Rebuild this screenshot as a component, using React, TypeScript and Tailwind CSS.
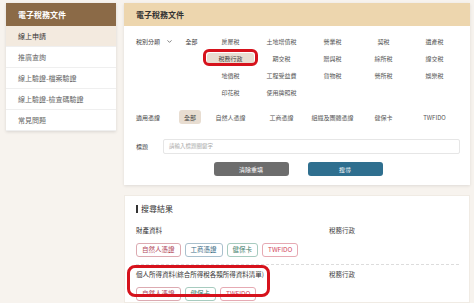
import React from 'react';
import { ChevronDown } from 'lucide-react';

const SIDE_ITEMS = ['線上申請', '推廣查詢', '線上驗證-檔案驗證', '線上驗證-檢查碼驗證', '常見問題'];

const TAX_TYPES = [
  '房屋稅', '土地增值稅', '營業稅', '契稅', '遺產稅',
  '稅務行政', '期交稅', '贈與稅', '綜所稅', '證交稅',
  '地價稅', '工程受益費', '貨物稅', '營所稅', '娛樂稅',
  '印花稅', '使用牌照稅',
];

const CERTS = ['自然人憑證', '工商憑證', '組織及團體憑證', '健保卡', 'TWFIDO'];

const TAG_STYLE: Record<string, string> = {
  '自然人憑證': 'border-[#dcaab1] text-[#b34a5c]',
  '工商憑證': 'border-[#a9c0cd] text-[#3f6f89]',
  '健保卡': 'border-[#a7cbbf] text-[#3d7c69]',
  TWFIDO: 'border-[#e6aab3] text-[#d2485d]',
};

const Tag: React.FC<{ label: string }> = ({ label }) => (
  <span
    className={`h-[14px] px-[5px] flex items-center rounded-[3px] border bg-white text-[6.5px] ${TAG_STYLE[label]}`}
  >
    {label}
  </span>
);

const ResultRow: React.FC<{ title: string; tags: string[] }> = ({ title, tags }) => (
  <div>
    <div className="h-[12px] flex items-center text-[6.5px] text-[#333]">
      <span className="w-[193px]">{title}</span>
      <span className="text-[#444]">稅務行政</span>
    </div>
    <div className="mt-[6px] flex gap-[4px]">
      {tags.map((t) => (
        <Tag key={t} label={t} />
      ))}
    </div>
  </div>
);

export default function App() {
  return (
    <div className="w-[474px] h-[303px] overflow-hidden bg-[#f7f3ee] flex gap-[8px] pl-[6px] pt-[3px] font-['Noto_Sans_CJK_TC','Noto_Sans',sans-serif]">
      {/* Sidebar */}
      <div className="w-[110px] self-start bg-white shadow-[0_1px_3px_rgba(0,0,0,0.12)]">
        <div className="h-[23px] bg-[#8b6a47] text-white text-[8px] font-bold pl-[12px] flex items-center">
          電子稅務文件
        </div>
        {SIDE_ITEMS.map((item, i) => (
          <div
            key={item}
            className={`h-[21px] pl-[12px] flex items-center text-[7px] border-b border-[#efefef] ${
              i === 0 ? 'bg-[#f3eadf] text-[#333]' : 'text-[#666]'
            }`}
          >
            {item}
          </div>
        ))}
      </div>

      {/* Main */}
      <div className="w-[346px] flex flex-col gap-[10px]">
        {/* Filter panel */}
        <div className="bg-white shadow-[0_1px_3px_rgba(0,0,0,0.1)]">
          <div className="h-[23px] bg-[#edd6ae] pl-[12px] flex items-center text-[8px] font-bold text-[#333]">
            電子稅務文件
          </div>
          <div className="pl-[12px] pr-[10px] pt-[7px] pb-[9px]">
            {/* Tax type */}
            <div className="flex">
              <div className="w-[42px] h-[17px] flex items-center gap-[6px] text-[6px] text-[#444]">
                稅別分類
                <ChevronDown size={7} strokeWidth={2.5} className="text-[#555]" />
              </div>
              <div className="w-[27px] h-[17px] flex items-center justify-center text-[6px] text-[#444]">全部</div>
              <div className="grid grid-cols-5 w-[255px]">
                {TAX_TYPES.map((t) => (
                  <div key={t} className="relative h-[17px] flex items-center justify-center text-[6px] text-[#555]">
                    {t === '稅務行政' ? (
                      <>
                        <span className="w-[47px] h-[11px] rounded-[3px] bg-[#e8ddd1] flex items-center justify-center text-[#444]">
                          {t}
                        </span>
                        <span className="absolute left-[-2px] top-[-1px] w-[55px] h-[17px] rounded-[6px] border-[3px] border-[#d6121c]" />
                      </>
                    ) : (
                      t
                    )}
                  </div>
                ))}
              </div>
            </div>

            {/* Certificate */}
            <div className="flex mt-[9px] h-[14px]">
              <div className="w-[42px] flex items-center text-[6px] text-[#444]">適用憑證</div>
              <div className="w-[27px] flex items-center">
                <span className="ml-[1px] w-[22px] h-[14px] rounded-[3px] bg-[#e8ddd1] flex items-center justify-center text-[6px] text-[#444]">
                  全部
                </span>
              </div>
              <div className="grid grid-cols-5 w-[255px]">
                {CERTS.map((c) => (
                  <div key={c} className="flex items-center justify-center text-[6px] text-[#555]">
                    {c}
                  </div>
                ))}
              </div>
            </div>

            {/* Title */}
            <div className="flex items-center mt-[15px]">
              <div className="w-[27px] text-[6px] text-[#444]">標題</div>
              <div className="flex-1 h-[15px] border border-[#e6e6e6] rounded-[2px] flex items-center pl-[5px] text-[5.5px] text-[#aaa]">
                請輸入標題關鍵字
              </div>
            </div>

            {/* Buttons */}
            <div className="flex justify-center gap-[19px] mt-[8px]">
              <button className="w-[75px] h-[14px] rounded-[3px] bg-[#6d6d6d] text-white text-[6px] flex items-center justify-center">
                清除重填
              </button>
              <button className="w-[75px] h-[14px] rounded-[3px] bg-[#2f6f8f] text-white text-[6px] flex items-center justify-center">
                搜尋
              </button>
            </div>
          </div>
        </div>

        {/* Results panel */}
        <div className="relative flex-1 bg-white border border-[#f0ebe4] pl-[11px] pr-[10px] pt-[7px]">
          <div className="h-[12px] flex items-center gap-[3px] text-[8px] text-[#333]">
            <span className="w-[2px] h-[8px] bg-[#333]" />
            搜尋結果
          </div>
          <div className="mt-[10px]">
            <ResultRow title="財產資料" tags={['自然人憑證', '工商憑證', '健保卡', 'TWFIDO']} />
          </div>
          <div className="mt-[7px] border-t border-dashed border-[#dcdcdc]" />
          <div className="mt-[4px]">
            <ResultRow title="個人所得資料(綜合所得稅各類所得資料清單)" tags={['自然人憑證', '健保卡', 'TWFIDO']} />
          </div>
          <span className="absolute left-[2px] top-[69px] w-[143px] h-[32px] rounded-[8px] border-[3px] border-[#d6121c]" />
        </div>
      </div>
    </div>
  );
}
